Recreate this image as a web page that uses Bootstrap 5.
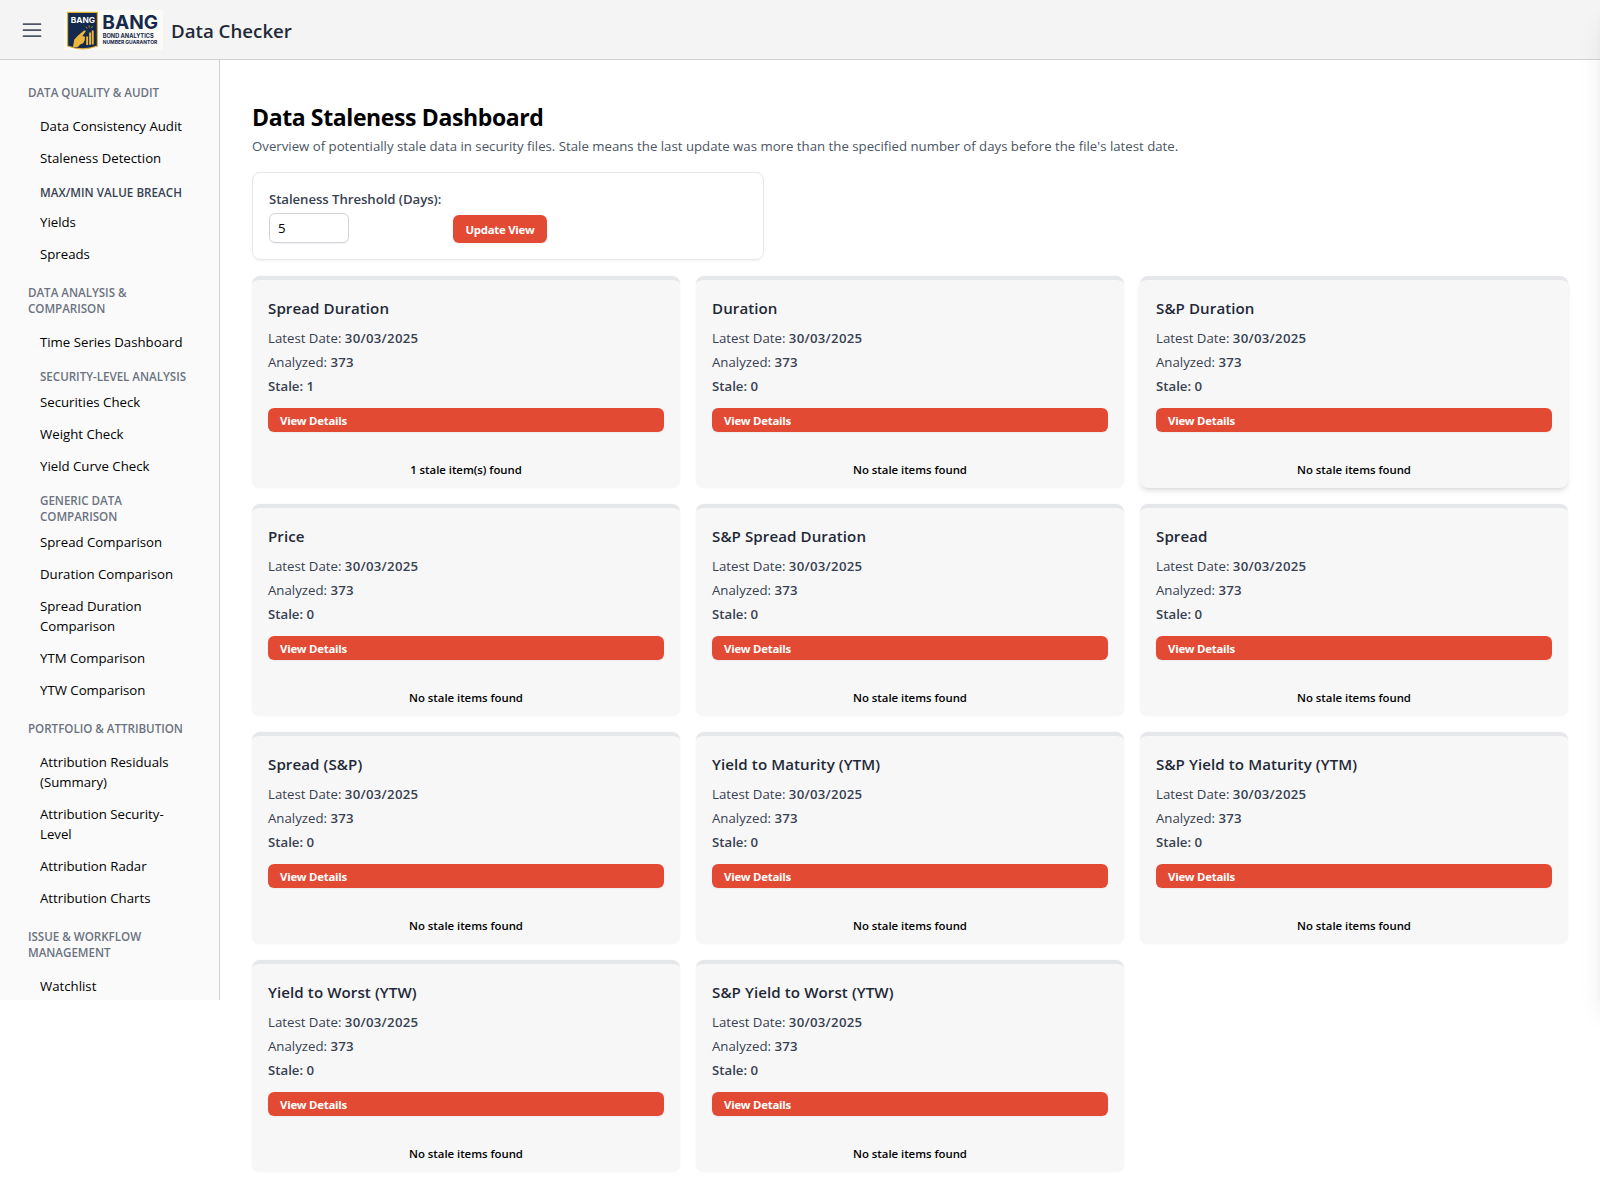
<!DOCTYPE html>
<html lang="en">
<head>
<meta charset="utf-8">
<meta name="viewport" content="width=device-width, initial-scale=1">
<title>Data Checker</title>
<link href="https://cdn.jsdelivr.net/npm/bootstrap@5.3.0/dist/css/bootstrap.min.css" rel="stylesheet">
<style>
  body { font-family: "Open Sans", "Noto Sans", sans-serif; font-size: 13.23px; line-height: 20px; color: #000; background: #fff; overflow-x: hidden; }
  .topbar { height: 60px; background: #f4f4f4; border-bottom: 1px solid #d1d1d1; padding: 0 22px; }
  .menu-btn { width: 20px; height: 20px; color: #4b5563; }
  .brand-logo { width: 99px; height: 40px; margin-left: 22px; overflow: visible; }
  .brand-text { font-size: 18.7px; font-weight: 600; line-height: 28px; color: #1f2937; margin-left: 8px; padding-top: 2px; }
  .side { width: 220px; height: 940px; background: #fafafa; border-right: 1px solid #d1d1d1; padding-top: 10px; overflow: hidden; }
  .side-head, .side-sub { font-size: 11.6px; line-height: 16px; font-weight: 600; color: #6b7280; text-transform: uppercase; letter-spacing: -.02px; }
  .side-head { padding: 15px 40px 9px 28px; }
  .side-sub { padding: 11px 24px 1px 40px; }
  .side-sub.strong-sub { color: #374151; padding-bottom: 5px; letter-spacing: .05px; }
  .side a { display: block; color: #000; text-decoration: none; padding: 6px 36px 6px 40px; line-height: 20px; }
  .main-area { padding: 41px 32px 32px; }
  .page-title { font-size: 23px; font-weight: 700; line-height: 32px; letter-spacing: -.38px; }
  .page-lead { color: #4b5563; margin: 3px 0 16px; }
  .filter-box { width: 512px; height: 88px; border: 1px solid #e5e7eb; border-radius: 8px; padding: 16px; box-shadow: 0 1px 2px rgba(0,0,0,.05); }
  .filter-left { width: 184px; }
  .filter-box label { font-weight: 600; color: #374151; line-height: 20px; letter-spacing: -.07px; }
  .days-input { width: 80px; height: 30px; border: 1px solid #d1d5db; border-radius: 6px; padding: 0 8px; font-size: 13.2px; box-shadow: 0 1px 2px rgba(0,0,0,.05); }
  .btn-red { background: #e34a33; color: #fff; border: 0; border-radius: 6px; font-size: 11.4px; font-weight: 700; line-height: 16px; padding: 5px 12px 3px; letter-spacing: -.25px; box-shadow: 0 1px 2px rgba(0,0,0,.05); }
  .btn-red:hover { background: #c93f2a; color: #fff; }
  .btn-tall { padding: 7px 0 5px; width: 94px; }
  .tiles { display: grid; grid-template-columns: repeat(3, 1fr); gap: 16px; margin-top: 16px; }
  .tile { height: 212px; background: #f7f7f7; border-top: 4px solid #e5e7eb; border-radius: 8px; padding: 16px 16px 10px; box-shadow: 0 0 3px rgba(0,0,0,.04); color: #374151; }
  .tile.raised { box-shadow: 0 4px 6px -1px rgba(0,0,0,.1), 0 2px 4px -2px rgba(0,0,0,.1); }
  .tile h3 { font-size: 15.1px; font-weight: 600; line-height: 24px; color: #1f2937; letter-spacing: .08px; margin: 0 0 8px; }
  .tile p { margin: 0 0 4px; }
  .tile b { font-weight: 600; }
  .tile p > b.num { letter-spacing: .28px; }
  .tile .btn-red { margin-top: 8px; }
  .tile-foot { font-size: 11.4px; line-height: 16px; font-weight: 600; color: #000; letter-spacing: -.03px; }
  .drawer { position: absolute; left: 1600px; top: 0; width: 384px; height: 1000px; background: #fff; box-shadow: 0 20px 25px -5px rgba(0,0,0,.1), 0 8px 10px -6px rgba(0,0,0,.1); }
  .drawer-clip { position: absolute; inset: 0; overflow: hidden; pointer-events: none; }
</style>
<script src="https://cdn.jsdelivr.net/npm/bootstrap@5.3.0/dist/js/bootstrap.bundle.min.js"></script>
</head>
<body class="position-relative">
<header class="topbar d-flex align-items-center">
  <svg class="menu-btn" viewBox="0 0 20 20" fill="none" stroke="currentColor" stroke-width="1.7" stroke-linecap="round"><path d="M1.500 4.200h17M1.500 10.200h17M1.500 16.200h17"/></svg>
  <svg class="brand-logo" viewBox="0 0 99 40" font-family="Inter, sans-serif" font-weight="700">
    <rect width="99" height="40" fill="#fbfaf6"/>
    <path d="M3.600 2.400h29.800v33.600q-7 2.600-14.900 2.800q-7.900-.2-14.900-2.800z" fill="#14294b" stroke="#dcae3a" stroke-width="1.200"/>
    <text x="6.700" y="12.700" font-size="8" fill="#fff" textLength="24.300" lengthAdjust="spacingAndGlyphs">BANG</text>
    <g fill="#eab53a">
      <path d="M22.200 26.500h1.900v8.500h-1.900zM25.100 22.500h1.900v12.300h-1.900zM27.700 20.500h2v14h-2z"/>
      <path d="M9 37l1.200-7.300 3.600-3.900 6.200-5.200q1.900-.7 1.700.9l-3.300 4.600 2.200.4q.9.900.1 1.900l.2 1.700-.9 1.500-.7 1.600-3.200 1.200-2.200 2.600z"/>
      <path d="M21.800 16.800l1.500 1.800M25.200 15.300v2.300M28.600 16l-1.400 2.200" stroke="#eab53a" stroke-width=".7" fill="none"/>
    </g>
    <g fill="#17294b">
      <text x="38.300" y="18.800" font-size="18.600" textLength="55.800" lengthAdjust="spacingAndGlyphs">BANG</text>
      <text x="38.700" y="27.500" font-size="5.600" textLength="51" lengthAdjust="spacingAndGlyphs">BOND ANALYTICS</text>
      <text x="38.700" y="34.200" font-size="5.200" textLength="54.500" lengthAdjust="spacingAndGlyphs">NUMBER GUARANTOR</text>
    </g>
  </svg>
  <span class="brand-text">Data Checker</span>
</header>
<div class="d-flex align-items-start">
  <nav class="side flex-shrink-0">
    <div class="side-head">Data Quality &amp; Audit</div>
    <a href="#">Data Consistency Audit</a>
    <a href="#">Staleness Detection</a>
    <div class="side-sub strong-sub">Max/Min Value Breach</div>
    <a href="#">Yields</a>
    <a href="#">Spreads</a>
    <div class="side-head">Data Analysis &amp; Comparison</div>
    <a href="#">Time Series Dashboard</a>
    <div class="side-sub">Security-Level Analysis</div>
    <a href="#">Securities Check</a>
    <a href="#">Weight Check</a>
    <a href="#">Yield Curve Check</a>
    <div class="side-sub">Generic Data<br>Comparison</div>
    <a href="#">Spread Comparison</a>
    <a href="#">Duration Comparison</a>
    <a href="#">Spread Duration<br>Comparison</a>
    <a href="#">YTM Comparison</a>
    <a href="#">YTW Comparison</a>
    <div class="side-head pe-0">Portfolio &amp; Attribution</div>
    <a href="#">Attribution Residuals (Summary)</a>
    <a href="#">Attribution Security-<br>Level</a>
    <a href="#">Attribution Radar</a>
    <a href="#">Attribution Charts</a>
    <div class="side-head">Issue &amp; Workflow<br>Management</div>
    <a href="#">Watchlist</a>
  </nav>
  <main class="main-area flex-grow-1">
    <h1 class="page-title m-0">Data Staleness Dashboard</h1>
    <p class="page-lead">Overview of potentially stale data in security files. Stale means the last update was more than the specified number of days before the file's latest date.</p>
    <form class="filter-box d-flex align-items-end">
      <div class="filter-left d-flex flex-column gap-1">
        <label for="days">Staleness Threshold (Days):</label>
        <input id="days" class="days-input" type="text" value="5">
      </div>
      <button type="button" class="btn btn-red btn-tall">Update View</button>
    </form>
    <section class="tiles" id="tiles"></section>
  </main>
</div>
<div class="drawer-clip"><div class="drawer"></div></div>
<script>
  const files = ["Spread Duration", "Duration", "S&amp;P Duration", "Price", "S&amp;P Spread Duration", "Spread", "Spread (S&amp;P)",
    "Yield to Maturity (YTM)", "S&amp;P Yield to Maturity (YTM)", "Yield to Worst (YTW)", "S&amp;P Yield to Worst (YTW)"];
  document.getElementById("tiles").innerHTML = files.map((name, i) => {
    const stale = i === 0 ? 1 : 0;
    return `<article class="tile d-flex flex-column${i === 2 ? " raised" : ""}">
      <h3>${name}</h3>
      <p>Latest Date: <b class="num">30/03/2025</b></p>
      <p>Analyzed: <b class="num">373</b></p>
      <p><b>Stale: ${stale}</b></p>
      <a href="#" class="btn btn-red text-start">View Details</a>
      <div class="tile-foot text-center mt-auto">${stale ? "1 stale item(s) found" : "No stale items found"}</div>
    </article>`;
  }).join("");
</script>
</body>
</html>
